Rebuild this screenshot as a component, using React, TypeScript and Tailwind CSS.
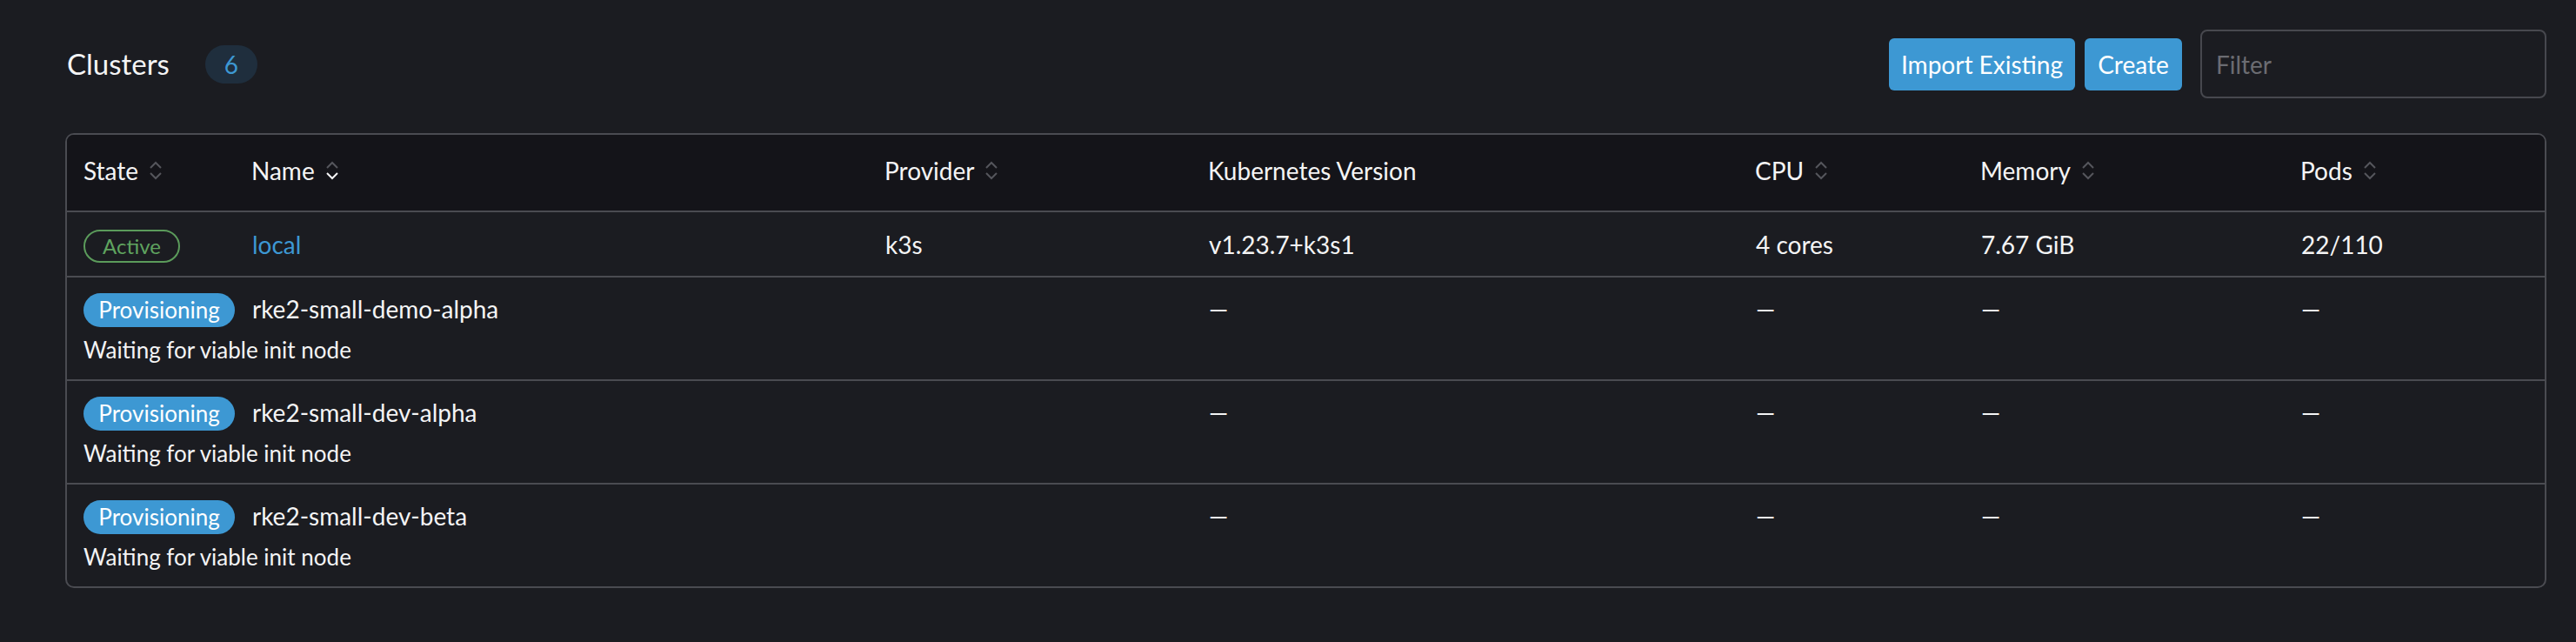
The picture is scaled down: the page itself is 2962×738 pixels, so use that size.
import React from 'react';

const cols = 'grid grid-cols-[193px_728px_372px_629px_259px_368px_1fr]';

const SortIcon: React.FC<{ active?: boolean }> = ({ active }) => (
  <svg width="16" height="22" viewBox="0 0 16 22" fill="none" className="ml-[12px] shrink-0">
    <polyline points="2,8 8,2 14,8" stroke="#55565c" strokeWidth="2" />
    <polyline points="2,14 8,20 14,14" stroke={active ? '#f4f4f5' : '#55565c'} strokeWidth="2" />
  </svg>
);

const headers = [
  { label: 'State', sort: true },
  { label: 'Name', sort: true, active: true },
  { label: 'Provider', sort: true },
  { label: 'Kubernetes Version', sort: false },
  { label: 'CPU', sort: true },
  { label: 'Memory', sort: true },
  { label: 'Pods', sort: true },
];

const provisioning = ['rke2-small-demo-alpha', 'rke2-small-dev-alpha', 'rke2-small-dev-beta'];

const Dash = () => <span className="pl-[20px]">—</span>;

export default function App() {
  return (
    <div
      className="min-h-screen w-full bg-[#1b1c21] text-[#f4f4f5] pl-[75px] pr-[34px] pt-[34px]"
      style={{ fontFamily: 'Lato, "Open Sans", sans-serif' }}
    >
      {/* Title bar */}
      <div className="flex items-center h-[79px]">
        <h1 className="text-[33px] leading-none font-normal ml-[2px]">Clusters</h1>
        <span className="ml-[41px] w-[60px] h-[44px] rounded-full bg-[#1f2e3d] text-[#3d98d3] text-[28px] flex items-center justify-center">
          6
        </span>
        <div className="ml-auto flex items-center">
          <button className="w-[214px] h-[60px] rounded-[6px] bg-[#3d98d3] text-white text-[28px]">Import Existing</button>
          <button className="ml-[11px] w-[112px] h-[60px] rounded-[6px] bg-[#3d98d3] text-white text-[28px]">Create</button>
          <input
            placeholder="Filter"
            className="ml-[21px] w-[398px] h-[79px] rounded-[8px] border-2 border-[#47484e] bg-transparent px-[16px] text-[28px] text-[#f4f4f5] placeholder:text-[#6b6c72] outline-none"
          />
        </div>
      </div>

      {/* Table */}
      <div className="mt-[40px] border-2 border-[#4a4b51] rounded-[10px] overflow-hidden text-[28px]">
        <div className={`${cols} h-[89px] pb-[5px] bg-[#141419] border-b-2 border-[#4a4b51] items-center`}>
          {headers.map((h) => (
            <div key={h.label} className="pl-[19px] flex items-center">
              <span>{h.label}</span>
              {h.sort && <SortIcon active={h.active} />}
            </div>
          ))}
        </div>

        <div className={`${cols} h-[75px] border-b-2 border-[#4a4b51] items-center`}>
          <div className="pl-[19px]">
            <span className="inline-flex items-center justify-center w-[111px] h-[38px] rounded-full border-2 border-[#5b9b5b] text-[#5fa35f] text-[24px]">
              Active
            </span>
          </div>
          <div className="pl-[20px] text-[#3d98d3]">local</div>
          <div className="pl-[20px]">k3s</div>
          <div className="pl-[20px]">v1.23.7+k3s1</div>
          <div className="pl-[20px]">4 cores</div>
          <div className="pl-[20px]">7.67 GiB</div>
          <div className="pl-[20px]">22/110</div>
        </div>

        {provisioning.map((name, i) => (
          <div
            key={name}
            className={`pt-[15px] ${i < provisioning.length - 1 ? 'h-[119px] border-b-2 border-[#4a4b51]' : 'h-[117px]'}`}
          >
            <div className={`${cols} h-[39px] items-center`}>
              <div className="pl-[19px]">
                <span className="inline-flex items-center justify-center w-[174px] h-[39px] rounded-full bg-[#3d98d3] text-white text-[26px]">
                  Provisioning
                </span>
              </div>
              <div className="pl-[20px]">{name}</div>
              <div />
              <Dash />
              <Dash />
              <Dash />
              <Dash />
            </div>
            <div className="pl-[19px] mt-[14px] text-[26px] leading-[30px]">Waiting for viable init node</div>
          </div>
        ))}
      </div>
    </div>
  );
}
